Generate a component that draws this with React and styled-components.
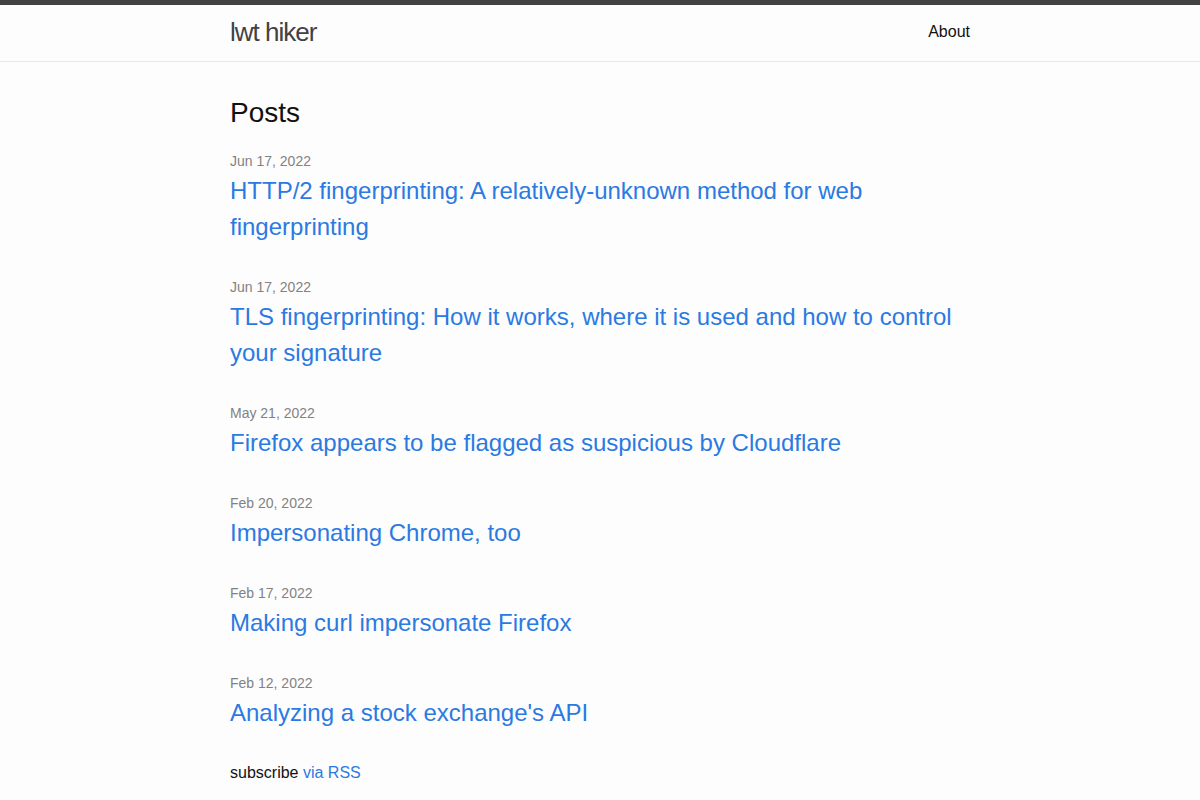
import React from 'react';
import styled, { createGlobalStyle } from 'styled-components';

const GlobalStyle = createGlobalStyle`
  html, body {
    margin: 0;
    padding: 0;
  }
  body {
    font: 400 16px/1.5 "Liberation Sans", Arial, Helvetica, sans-serif;
    color: #111;
    background: #fdfdfd;
  }
`;

const Header = styled.header`
  border-top: 5px solid #424242;
  border-bottom: 1px solid #e8e8e8;
  min-height: 55.95px;
`;

const Wrapper = styled.div`
  max-width: 740px;
  margin: 0 auto;
  padding: 0 30px;
`;

const HeaderRow = styled(Wrapper)`
  display: flex;
  justify-content: space-between;
  align-items: flex-start;
`;

const SiteTitle = styled.a`
  font-size: 26px;
  font-weight: 300;
  line-height: 54px;
  letter-spacing: -1px;
  color: #424242;
  text-decoration: none;
`;

const NavLink = styled.a`
  line-height: 54px;
  color: #111;
  text-decoration: none;
`;

const Main = styled.main`
  padding: 30px 0;
`;

const Heading = styled.h2`
  font-size: 28px;
  font-weight: 400;
  line-height: 1.5;
  margin: 0 0 15px;
`;

const PostList = styled.ul`
  list-style: none;
  margin: 0;
  padding: 0;
`;

const PostItem = styled.li`
  margin-bottom: 30px;
`;

const PostMeta = styled.span`
  font-size: 14px;
  color: #828282;
`;

const PostTitle = styled.h3`
  margin: 0;
  font-weight: 400;
`;

const PostLink = styled.a`
  display: block;
  font-size: 24px;
  line-height: 1.5;
  color: #2a7ae2;
  text-decoration: none;
`;

const Subscribe = styled.p`
  margin: 0;
`;

const Link = styled.a`
  color: #2a7ae2;
  text-decoration: none;
`;

const posts = [
  { date: 'Jun 17, 2022', title: 'HTTP/2 fingerprinting: A relatively-unknown method for web fingerprinting' },
  { date: 'Jun 17, 2022', title: 'TLS fingerprinting: How it works, where it is used and how to control your signature' },
  { date: 'May 21, 2022', title: 'Firefox appears to be flagged as suspicious by Cloudflare' },
  { date: 'Feb 20, 2022', title: 'Impersonating Chrome, too' },
  { date: 'Feb 17, 2022', title: 'Making curl impersonate Firefox' },
  { date: 'Feb 12, 2022', title: "Analyzing a stock exchange's API" },
];

const App = () => (
  <>
    <GlobalStyle />
    <Header>
      <HeaderRow>
        <SiteTitle href="#">lwt hiker</SiteTitle>
        <nav>
          <NavLink href="#">About</NavLink>
        </nav>
      </HeaderRow>
    </Header>
    <Main>
      <Wrapper>
        <Heading>Posts</Heading>
        <PostList>
          {posts.map((p, i) => (
            <PostItem key={i}>
              <PostMeta>{p.date}</PostMeta>
              <PostTitle>
                <PostLink href="#">{p.title}</PostLink>
              </PostTitle>
            </PostItem>
          ))}
        </PostList>
        <Subscribe>
          subscribe <Link href="#">via RSS</Link>
        </Subscribe>
      </Wrapper>
    </Main>
  </>
);

export default App;
